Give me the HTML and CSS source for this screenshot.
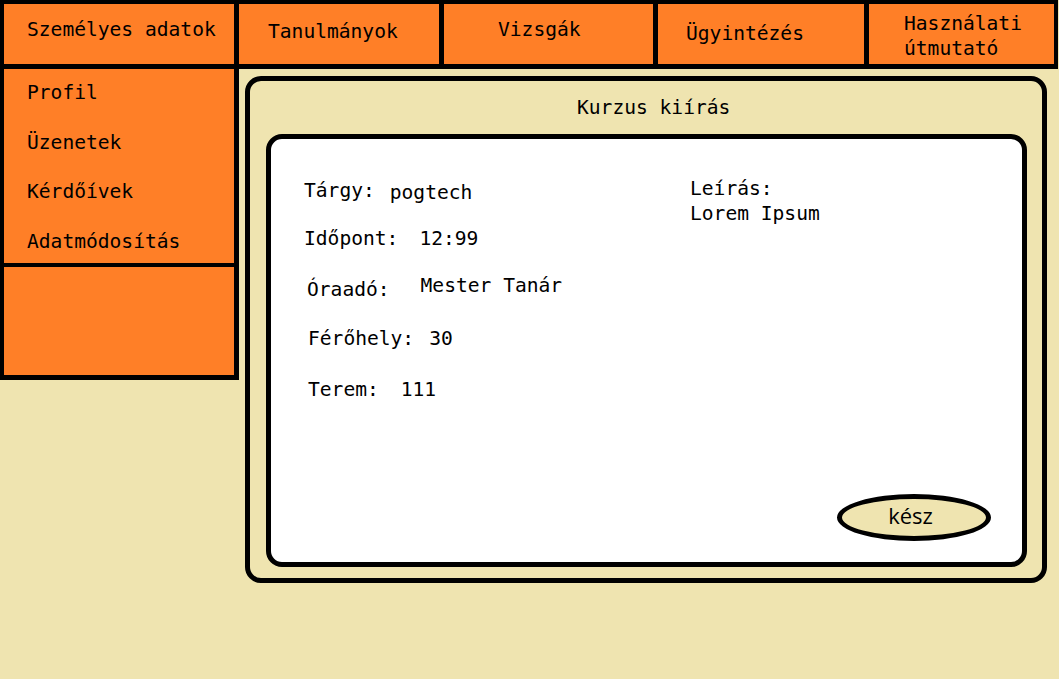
FILE: index.html
```html
<!DOCTYPE html>
<html lang="hu">
<head>
<meta charset="utf-8">
<title>Kurzus kiírás</title>
<link rel="stylesheet" href="styles.css">
</head>
<body>
<nav class="topnav">
  <a class="tab tab-1">Személyes adatok</a>
  <a class="tab tab-2">Tanulmányok</a>
  <a class="tab tab-3">Vizsgák</a>
  <a class="tab tab-4">Ügyintézés</a>
  <a class="tab tab-5">Használati<br>útmutató</a>
</nav>
<div class="layout">
  <aside class="sidebar">
    <ul class="side-menu">
      <li>Profil</li>
      <li>Üzenetek</li>
      <li>Kérdőívek</li>
      <li>Adatmódosítás</li>
    </ul>
    <div class="side-extra"></div>
  </aside>
  <main class="panel">
    <h1 class="panel-title">Kurzus kiírás</h1>
    <section class="card">
      <div class="card-body">
        <div class="fields">
          <div class="field field-1"><span class="label">Tárgy:</span><span class="value">pogtech</span></div>
          <div class="field field-2"><span class="label">Időpont:</span><span class="value">12:99</span></div>
          <div class="field field-3"><span class="label">Óraadó:</span><span class="value">Mester Tanár</span></div>
          <div class="field field-4"><span class="label">Férőhely:</span><span class="value">30</span></div>
          <div class="field field-5"><span class="label">Terem:</span><span class="value">111</span></div>
        </div>
        <div class="desc">
          <div class="desc-label">Leírás:</div>
          <div class="desc-text">Lorem Ipsum</div>
        </div>
      </div>
      <div class="actions">
        <button class="done" type="button">kész</button>
      </div>
    </section>
  </main>
</div>
</body>
</html>
```
FILE: styles.css
```css
* {
  box-sizing: border-box;
  margin: 0;
  padding: 0;
}

body {
  margin: 0;
  width: 1059px;
  height: 679px;
  overflow: hidden;
  background: #EFE4B0;
  color: #000;
  font-family: "DejaVu Sans Mono", "Liberation Mono", monospace;
  font-size: 19.6px;
  line-height: 25px;
}

/* top navigation */
.topnav {
  display: flex;
  gap: 5px;
  width: 1058px;
  height: 69px;
  padding: 4px 4px 5px 4px;
  background: #000;
}

.tab {
  display: block;
  height: 60px;
  background: #FF7F27;
  color: #000;
  text-decoration: none;
  white-space: nowrap;
}

.tab-1 { width: 230px; padding: 13px 0 0 23px; }
.tab-2 { width: 200px; padding: 15px 0 0 29px; }
.tab-3 { width: 209px; padding: 13px 0 0 54px; }
.tab-4 { width: 206px; padding: 17px 0 0 28px; }
.tab-5 { width: 185px; padding: 7px 0 0 35px; }

/* layout */
.layout {
  display: flex;
  align-items: flex-start;
  gap: 6px;
}

.sidebar {
  width: 239px;
  background: #FF7F27;
  border-left: 4px solid #000;
  border-right: 5px solid #000;
  border-bottom: 5px solid #000;
}

.side-menu {
  list-style: none;
  height: 198px;
  padding: 11px 0 0 23px;
  display: flex;
  flex-direction: column;
  gap: 24.5px;
  border-bottom: 4px solid #000;
}

.side-extra {
  height: 108px;
}

/* main panel */
.panel {
  margin-top: 7px;
  width: 802px;
  height: 507px;
  border: 5px solid #000;
  border-radius: 16px;
  background: #EFE4B0;
  padding: 0 15px 11px 16px;
  display: flex;
  flex-direction: column;
}

.panel-title {
  font-size: 19.6px;
  font-weight: normal;
  line-height: 25px;
  padding: 14px 0 0 311px;
  margin-bottom: 14px;
}

.card {
  flex: 1;
  background: #fff;
  border: 5px solid #000;
  border-radius: 16px;
  display: flex;
  flex-direction: column;
}

.card-body {
  flex: 1;
  display: flex;
}

.fields {
  width: 419px;
  padding: 39px 0 0 33px;
}

.field {
  display: flex;
  align-items: flex-start;
  white-space: nowrap;
}

.field-1 .value { padding-top: 2px; margin-left: 15px; }

.field-2 { margin-top: 21px; }
.field-2 .value { margin-left: 21px; }

.field-3 { margin-top: 22px; }
.field-3 .label { margin-left: 3px; padding-top: 4px; }
.field-3 .value { margin-left: 31px; }

.field-4 { margin-top: 24px; }
.field-4 .label { margin-left: 4px; }
.field-4 .value { margin-left: 15px; }

.field-5 { margin-top: 26px; }
.field-5 .label { margin-left: 4px; }
.field-5 .value { margin-left: 22px; }

.desc {
  padding-top: 37px;
  white-space: nowrap;
}

.actions {
  display: flex;
  justify-content: flex-end;
  padding: 0 31px 21px 0;
}

.done {
  width: 154px;
  height: 47px;
  border: 5px solid #000;
  border-radius: 50%;
  background: #EFE4B0;
  color: #000;
  font-family: "Open Sans", "Noto Sans", sans-serif;
  font-size: 22px;
  line-height: normal;
  display: flex;
  align-items: center;
  justify-content: center;
  padding: 0 7px 6px 0;
}
```
